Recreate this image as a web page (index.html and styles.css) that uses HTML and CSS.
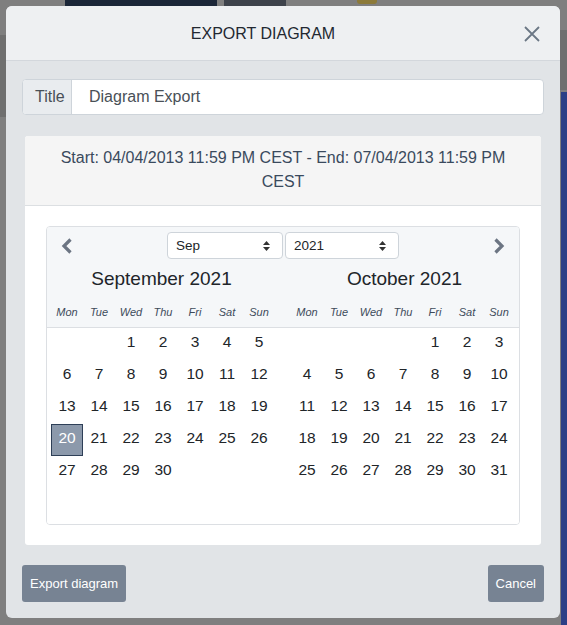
FILE: index.html
```html
<!DOCTYPE html>
<html>
<head>
<meta charset="utf-8">
<link rel="stylesheet" href="styles.css">
</head>
<body>
<div class="backdrop">
  <div class="bg-navy"></div>
  <div class="bg-slate"></div>
  <div class="bg-badge"></div>
  <div class="bg-left"></div>
  <div class="bg-right-top"></div>
  <div class="bg-right-blue"></div>
</div>
<div class="modal">
  <div class="modal-header">
    <div class="modal-title">EXPORT DIAGRAM</div>
    <button class="close" aria-label="Close">
      <svg width="16" height="16" viewBox="0 0 16 16"><path d="M1 1 L15 15 M15 1 L1 15" stroke="#6b7785" stroke-width="1.8" fill="none"/></svg>
    </button>
  </div>
  <div class="modal-body">
    <div class="input-group">
      <span class="addon">Title</span>
      <div class="input">Diagram Export</div>
    </div>
    <div class="card">
      <div class="card-header">Start: 04/04/2013 11:59 PM CEST - End: 07/04/2013 11:59 PM CEST</div>
      <div class="card-body">
        <div class="calendar">
          <div class="cal-head">
            <div class="cal-nav">
              <span class="nav-arrow prev"><svg width="12" height="16" viewBox="0 0 12 16"><polyline points="9.5,1.5 3,8 9.5,14.5" stroke="#6c7583" stroke-width="3.2" fill="none"/></svg></span>
              <div class="selects">
                <div class="select sel-month"><span>Sep</span><svg width="7" height="10" viewBox="0 0 7 10"><path d="M0 4 L3.5 0 L7 4 Z M0 6 L3.5 10 L7 6 Z" fill="#333"/></svg></div>
                <div class="select sel-year"><span>2021</span><svg width="7" height="10" viewBox="0 0 7 10"><path d="M0 4 L3.5 0 L7 4 Z M0 6 L3.5 10 L7 6 Z" fill="#333"/></svg></div>
              </div>
              <span class="nav-arrow next"><svg width="12" height="16" viewBox="0 0 12 16"><polyline points="2.5,1.5 9,8 2.5,14.5" stroke="#6c7583" stroke-width="3.2" fill="none"/></svg></span>
            </div>
            <div class="months-head">
              <div class="month-head first">
                <div class="month-title">September 2021</div>
                <div class="weekdays"><span>Mon</span><span>Tue</span><span>Wed</span><span>Thu</span><span>Fri</span><span>Sat</span><span>Sun</span></div>
              </div>
              <div class="month-head second">
                <div class="month-title">October 2021</div>
                <div class="weekdays"><span>Mon</span><span>Tue</span><span>Wed</span><span>Thu</span><span>Fri</span><span>Sat</span><span>Sun</span></div>
              </div>
            </div>
          </div>
          <div class="cal-body">
            <div class="days">
              <span></span><span></span><span>1</span><span>2</span><span>3</span><span>4</span><span>5</span>
              <span>6</span><span>7</span><span>8</span><span>9</span><span>10</span><span>11</span><span>12</span>
              <span>13</span><span>14</span><span>15</span><span>16</span><span>17</span><span>18</span><span>19</span>
              <span class="selected">20</span><span>21</span><span>22</span><span>23</span><span>24</span><span>25</span><span>26</span>
              <span>27</span><span>28</span><span>29</span><span>30</span><span></span><span></span><span></span>
              <span></span><span></span><span></span><span></span><span></span><span></span><span></span>
            </div>
            <div class="days">
              <span></span><span></span><span></span><span></span><span>1</span><span>2</span><span>3</span>
              <span>4</span><span>5</span><span>6</span><span>7</span><span>8</span><span>9</span><span>10</span>
              <span>11</span><span>12</span><span>13</span><span>14</span><span>15</span><span>16</span><span>17</span>
              <span>18</span><span>19</span><span>20</span><span>21</span><span>22</span><span>23</span><span>24</span>
              <span>25</span><span>26</span><span>27</span><span>28</span><span>29</span><span>30</span><span>31</span>
              <span></span><span></span><span></span><span></span><span></span><span></span><span></span>
            </div>
          </div>
        </div>
      </div>
    </div>
  </div>
  <div class="modal-footer">
    <button class="btn">Export diagram</button>
    <button class="btn">Cancel</button>
  </div>
</div>
</body>
</html>
```
FILE: styles.css
```css
html, body {
  margin: 0;
  padding: 0;
}
body {
  width: 567px;
  height: 625px;
  overflow: hidden;
  background: #7f7f7f;
  font-family: "Liberation Sans", Arial, sans-serif;
  position: relative;
}
.backdrop {
  position: absolute;
  inset: 0;
}
.backdrop div { position: absolute; }
.bg-navy { left: 65px; top: 0; width: 152px; height: 8px; background: #1b2638; }
.bg-slate { left: 224px; top: 0; width: 62px; height: 8px; background: #3e434b; }
.bg-badge { left: 357px; top: 0; width: 20px; height: 4px; background: #8c7a3a; border-radius: 0 0 3px 3px; }
.bg-left { left: 0; top: 35px; width: 6px; height: 82px; background: #6f6f6f; }
.bg-right-top { right: 0; top: 30px; width: 7px; height: 60px; background: #6f6f6f; }
.bg-right-blue { right: 0; top: 92px; width: 6px; height: 533px; background: #2b3f86; }

.modal {
  position: relative;
  margin: 6px 0 0 6px;
  width: 554px;
  height: 612px;
  background: #e1e4e7;
  border-radius: 6px;
  overflow: hidden;
  display: flex;
  flex-direction: column;
}
.modal-header {
  height: 55px;
  background: #eef0f2;
  border-bottom: 1px solid #d3d7dc;
  display: flex;
  align-items: center;
  padding: 1px 16px 0;
}
.modal-title {
  flex: 1;
  text-align: center;
  font-size: 16px;
  color: #222831;
}
.close {
  width: 40px;
  height: 30px;
  border: 0;
  background: none;
  padding: 0;
  display: flex;
  align-items: center;
  justify-content: flex-end;
  padding-right: 4px;
}
.modal-body {
  padding: 18px 16px 0;
}
.input-group {
  display: flex;
  height: 36px;
  border: 1px solid #ced4da;
  border-radius: 4px;
  box-sizing: border-box;
  overflow: hidden;
  background: #fff;
}
.addon {
  width: 49px;
  box-sizing: border-box;
  background: #e9ecef;
  border-right: 1px solid #ced4da;
  font-size: 16px;
  color: #495057;
  display: flex;
  align-items: center;
  padding-left: 12px;
}
.input {
  flex: 1;
  display: flex;
  align-items: center;
  padding-left: 17px;
  font-size: 16px;
  color: #495057;
}
.card {
  margin: 21px 3px 0;
  background: #fff;
  border-radius: 3px;
  overflow: hidden;
}
.card-header {
  background: #f5f5f5;
  border-bottom: 1px solid #dcdfe2;
  padding: 10px 24px 11px;
  text-align: center;
  font-size: 16px;
  line-height: 24px;
  color: #3a4a5d;
}
.card-body {
  padding: 20px 21px 20px;
}
.calendar {
  border: 1px solid #dcdfe3;
  border-radius: 4px;
  overflow: hidden;
}
.cal-head {
  background: #f5f7f9;
  border-bottom: 1px solid #dcdfe3;
}
.cal-nav {
  height: 36px;
  box-sizing: border-box;
  padding: 5px 14px 4px;
  display: grid;
  grid-template-columns: 1fr auto 1fr;
  align-items: center;
}
.nav-arrow { display: flex; }
.nav-arrow.prev { justify-self: start; }
.nav-arrow.next { justify-self: end; }
.selects {
  display: flex;
  gap: 2px;
}
.select {
  height: 27px;
  box-sizing: border-box;
  background: #fff;
  border: 1px solid #ced4da;
  border-radius: 4px;
  display: flex;
  align-items: center;
  justify-content: space-between;
  padding: 0 12px 0 8px;
  font-size: 13.5px;
  color: #212529;
}
.sel-month { width: 116px; }
.sel-year { width: 114px; }
.months-head {
  display: flex;
  gap: 16px;
  padding: 0 4px;
}
.month-head { width: 224px; }
.month-title {
  height: 32px;
  line-height: 32px;
  text-align: center;
  font-size: 19px;
  color: #212529;
}
.first .month-title { padding-right: 3px; }
.second .month-title { padding-left: 3px; }
.weekdays {
  display: grid;
  grid-template-columns: repeat(7, 32px);
  height: 31px;
  align-items: center;
  margin-top: 1px;
}
.weekdays span {
  text-align: center;
  font-size: 11px;
  font-style: italic;
  color: #3e4b5b;
}
.cal-body {
  display: flex;
  gap: 16px;
  padding: 0 4px 4px;
  background: #fff;
}
.days {
  display: grid;
  grid-template-columns: repeat(7, 32px);
  grid-auto-rows: 32px;
}
.days span {
  text-align: center;
  line-height: 28px;
  font-size: 15.5px;
  color: #212529;
  box-sizing: border-box;
}
.days span.selected {
  background: #8c99ab;
  border: 1px solid #2e3f57;
  color: #fff;
  line-height: 26px;
}
.modal-footer {
  padding: 20px 16px 16px;
  display: flex;
  justify-content: space-between;
}
.btn {
  height: 37px;
  padding: 0 8px;
  border: 0;
  border-radius: 3px;
  background: #778393;
  color: #fff;
  font-family: "Liberation Sans", Arial, sans-serif;
  font-size: 13px;
}
```
